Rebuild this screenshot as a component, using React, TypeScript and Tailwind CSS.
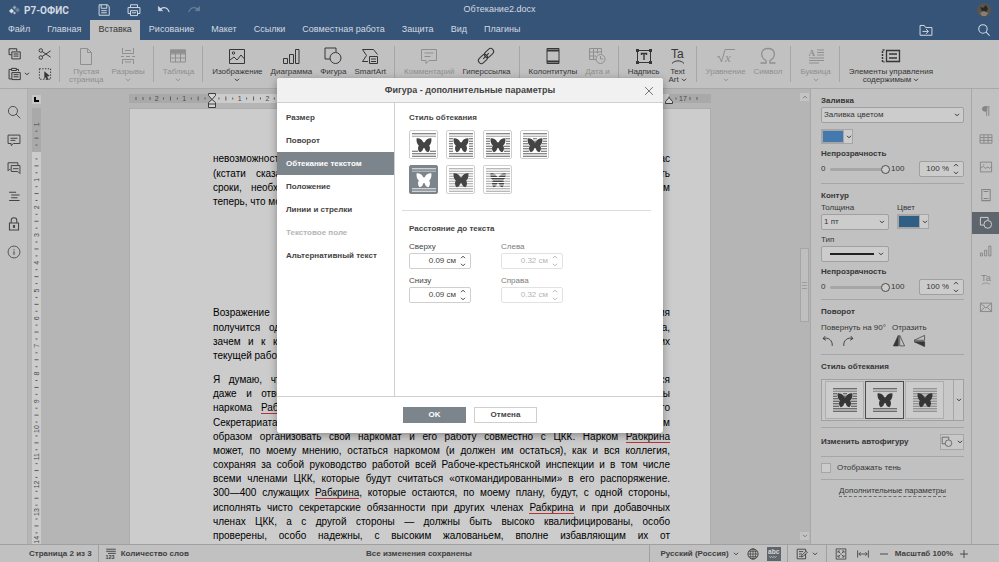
import clsx from 'clsx'
import type { ReactNode } from 'react'

type WrapKind = 'inline' | 'square' | 'tight' | 'through' | 'topbottom' | 'front' | 'behind'

const CM = 27.7

function Icon({
  children,
  size = 'size-5',
  className,
}: {
  children: ReactNode
  size?: string
  className?: string
}) {
  return (
    <svg
      viewBox="0 0 20 20"
      className={clsx(size, 'shrink-0', className)}
      fill="none"
      stroke="currentColor"
      strokeWidth="1"
      aria-hidden="true"
    >
      {children}
    </svg>
  )
}

function Chevron({ className }: { className?: string }) {
  return (
    <svg
      viewBox="0 0 6 4"
      className={clsx('h-1 w-1.5 shrink-0', className)}
      fill="none"
      stroke="currentColor"
      strokeWidth="1"
      aria-hidden="true"
    >
      <path d="M1 .8 3 2.8 5 .8" />
    </svg>
  )
}

const ROWS = [0, 1, 2, 3, 4, 5, 6, 7, 8, 9]

function wrapSegments(kind: WrapKind, row: number): number[][] {
  const edge = row < 2 || row > 7
  if (edge) return [[0, 24]]
  if (kind === 'topbottom') return []
  if (kind === 'inline') return row === 7 ? [[0, 6], [18, 24]] : []
  if (kind === 'square') return [[0, 4], [20, 24]]
  if (kind === 'tight') return row < 5 ? [[0, 4], [20, 24]] : [[0, 6], [18, 24]]
  if (kind === 'through') {
    if (row < 4) return [[0, 4], [10, 14], [20, 24]]
    return row < 5 ? [[0, 5], [19, 24]] : [[0, 6], [18, 24]]
  }
  return [[0, 24]]
}

function WrapIcon({ kind }: { kind: WrapKind }) {
  const faint = kind === 'front' || kind === 'behind'
  return (
    <svg viewBox="0 0 24 24" className="size-6" stroke="currentColor" fill="none" aria-hidden="true">
      {ROWS.flatMap((row) =>
        wrapSegments(kind, row).map(([from, to]) => (
          <path
            key={`${row}-${from}`}
            d={`M${from} ${0.75 + row * 2.5}H${to}`}
            opacity={faint || row === 1 ? 0.5 : 0.85}
          />
        )),
      )}
      <path
        d="M4.600 5.300C7.500 5 10.200 6.500 11.200 9.200H12.800C13.800 6.500 16.500 5 19.400 5.300C19.800 8.500 19 11.300 17.200 12.500C18.500 14.500 18.200 17.500 16.400 19.300C14.300 19 13.200 17.300 12.800 15.300H11.200C10.800 17.300 9.700 19 7.600 19.300C5.800 17.500 5.500 14.500 6.800 12.500C5 11.300 4.200 8.500 4.600 5.300Z"
        fill="currentColor"
        stroke="none"
      />
      {kind === 'behind' && (
        <path d="M4.500 7H19.500M4.500 9.500H19.500M4.500 12H19.500M4.500 14.500H19.500M4.500 17H19.500" stroke="#fff" />
      )}
    </svg>
  )
}

const TABS = ['Файл', 'Главная', 'Вставка', 'Рисование', 'Макет', 'Ссылки', 'Совместная работа', 'Защита', 'Вид', 'Плагины']

function Header() {
  return (
    <header className="bg-[#365477] text-[9px] text-[#d3dae2]">
      <div className="relative flex h-5 items-center px-2">
        <svg viewBox="0 0 12 12" className="size-3" aria-hidden="true">
          <path d="M1 7 3.5 4.5 6 7 3.5 9.5Z" fill="#d3dae2" />
          <path d="M4.5 3.5 6.5 1.5 8.5 3.5 6.5 5.5Z" fill="#8fa3ba" />
          <path d="M7 6 9.5 3.5 12 6 9.5 8.5Z" fill="#6d7f94" />
          <path d="M5 9 6.5 7.5 8 9 6.5 10.5Z" fill="#b7c3d0" />
        </svg>
        <span className="ml-1 w-[45px] whitespace-nowrap font-[Roboto,sans-serif] text-[10px] font-bold">Р7-ОФИС</span>
        <div className="ml-7 flex items-center gap-4">
          <button type="button" aria-label="Сохранить">
            <Icon size="size-3.5">
              <path d="M3 2.5h12l2.5 3v12H3zM6 2.5v5h8v-5M6 11h8M6 14h8" strokeWidth="1.4" />
            </Icon>
          </button>
          <button type="button" aria-label="Печать">
            <Icon size="size-3.5">
              <path d="M5 6V2.500h10V6M5 15H1.500V6.500h17V15H15M5 11h10v7H5zM7 14h6" strokeWidth="1.4" />
            </Icon>
          </button>
          <button type="button" aria-label="Отменить">
            <Icon size="size-3.5">
              <path d="M4 9C9 5 15 6 17.500 13" strokeWidth="1.5" />
              <path d="M2 5v6h6z" fill="currentColor" />
            </Icon>
          </button>
          <button type="button" aria-label="Повторить" className="text-[#68819c]">
            <Icon size="size-3.5">
              <path d="M16 9C11 5 5 6 2.500 13" strokeWidth="1.5" />
              <path d="M18 5v6h-6z" fill="currentColor" />
            </Icon>
          </button>
        </div>
        <span className="absolute inset-x-0 text-center">Обтекание2.docx</span>
        <svg viewBox="0 0 14 14" className="ml-auto size-3.5" aria-hidden="true">
          <circle cx="7" cy="7" r="7" fill="#57554f" />
          <path d="M3 4 6 5 9 2 11 6 9 9 5 8Z" fill="#2a2724" />
          <path d="M3 10 7 8 11 10 9 13H5Z" fill="#8a7f72" />
        </svg>
      </div>
      <nav className="flex h-5 items-stretch gap-px" aria-label="Вкладки">
        {TABS.map((tab) => (
          <button
            key={tab}
            type="button"
            className={clsx('px-2', tab === 'Вставка' && 'bg-[#c1c1c1] text-[#363636]')}
          >
            {tab}
          </button>
        ))}
        <div className="ml-auto flex items-center gap-11 pr-2">
          <button type="button" aria-label="Открыть расположение файла">
            <Icon size="size-3.5">
              <path d="M1.500 3.500h6l2 3h9v11h-17zM5 12h8M10 8.500l3.500 3.500-3.500 3.500" strokeWidth="1.4" />
            </Icon>
          </button>
          <button type="button" aria-label="Поиск">
            <Icon size="size-3.5">
              <circle cx="8.500" cy="8.500" r="6" strokeWidth="1.5" />
              <path d="m13 13 5 5" strokeWidth="1.5" />
            </Icon>
          </button>
        </div>
      </nav>
    </header>
  )
}

function Tool({
  icon,
  label,
  second,
  menu,
  off,
}: {
  icon: ReactNode
  label: string
  second?: string
  menu?: boolean
  off?: boolean
}) {
  return (
    <button
      type="button"
      disabled={off}
      className={clsx('flex flex-col items-center pt-1.5 leading-[8px]', off && 'text-[#8f8f8f]')}
    >
      <Icon>{icon}</Icon>
      <span className="mt-0.5 whitespace-nowrap">{label}</span>
      <span className="flex h-2 items-center gap-0.5 whitespace-nowrap">
        {second}
        {menu && <Chevron />}
      </span>
    </button>
  )
}

function Divider() {
  return <span className="my-1.5 mr-px w-px bg-[#a6a6a6]" />
}

const SHAPES = (
  <>
    <path d="M7 13H2V2h11v4" />
    <circle cx="12.500" cy="12" r="5.500" />
  </>
)

function Toolbar() {
  return (
    <div className="flex h-[49px] gap-2 border-b border-[#a8a8a8] bg-[#c1c1c1] pl-2 text-[8px] text-[#363636]">
      <div className="grid w-[43px] grid-cols-2 content-center gap-x-4 gap-y-1.5">
        <button type="button" aria-label="Копировать">
          <Icon size="size-3.5">
            <path d="M5 11H1.500V2.500h11V6M5.500 7h12v10h-12zM8 10h7M8 13h7" strokeWidth="1.4" />
          </Icon>
        </button>
        <button type="button" aria-label="Вырезать">
          <Icon size="size-3.5">
            <circle cx="4" cy="5" r="2.500" strokeWidth="1.4" />
            <circle cx="4" cy="15" r="2.500" strokeWidth="1.400" />
            <path d="m6 6.500 12 8M6 13.500l12-8" strokeWidth="1.4" />
          </Icon>
        </button>
        <button type="button" aria-label="Вставить" className="flex items-center gap-0.5">
          <Icon size="size-3.5">
            <path d="M5 17H1.500V3.500H5M12 3.500h3V6M5 2h7v3H5zM5.500 8h12v10h-12zM8 11h7M8 14h7" strokeWidth="1.4" />
          </Icon>
          <Chevron />
        </button>
        <button type="button" aria-label="Выделить все">
          <Icon size="size-3.5">
            <path d="M2 2.500h16v15H2z" strokeDasharray="2 2" strokeWidth="1.4" />
            <path d="m9 6 8 7-4 .5 2 4-2 1-2-4-2 3z" fill="currentColor" stroke="none" />
          </Icon>
        </button>
      </div>
      <Divider />
      <Tool off label="Пустая" second="страница" icon={<path d="M4.500 2.500h7l4 4v12h-11zM11.500 2.500v4h4" />} />
      <Tool
        off
        menu
        label="Разрывы"
        icon={<path d="M4.500 2v5.500h11V2M3 10.500h3m2 0h4m2 0h3M4.500 18v-4.500h11V18M7 4.500h6M7 16h6" />}
      />
      <Divider />
      <Tool
        off
        menu
        label="Таблица"
        icon={
          <>
            <path d="M2.500 4h15v12h-15zM2.500 8h15M2.500 12h15M7.500 4v12M12.500 4v12" />
            <path d="M2.500 4h15v3h-15z" fill="currentColor" />
          </>
        }
      />
      <Divider />
      <Tool
        menu
        label="Изображение"
        icon={
          <>
            <path d="M2.500 3.500h15v14h-15zM3 14l4-3 3 3 4-5 3.500 4" />
            <circle cx="6.500" cy="7" r="1.200" />
          </>
        }
      />
      <Tool label="Диаграмма" icon={<path d="M2.500 12.500h4v5h-4zM8.500 8.500h4v9h-4zM14.500 3.500h3.500v14h-3.500z" />} />
      <Tool menu label="Фигура" icon={SHAPES} />
      <Tool
        label="SmartArt"
        icon={
          <>
            <path d="M8 15.500H2.500l4-6-4-6h11l4 5" />
            <path d="M9.500 10.500h8v7h-8zM11 13h5M11 15.500h5" />
          </>
        }
      />
      <Divider />
      <Tool off label="Комментарий" icon={<path d="M2.500 3.500h15v11H10L7 17.500v-3H2.500zM5.500 7h9M5.500 10.500h6" />} />
      <Tool
        label="Гиперссылка"
        icon={
          <g transform="rotate(-45 10 10)">
            <rect x="0.500" y="7" width="10.500" height="6" rx="3" />
            <rect x="9" y="7" width="10.500" height="6" rx="3" />
            <path d="M6 10h8" />
          </g>
        }
      />
      <Divider />
      <Tool
        label="Колонтитулы"
        menu
        icon={
          <>
            <path d="M4 2.500h12v15H4z" />
            <path d="M4 4.500h12M4 15.500h12" strokeWidth="2" />
          </>
        }
      />
      <Tool
        off
        label="Дата и"
        second="время"
        icon={
          <>
            <path d="M9 13.500H2.500v-11h12v5M2.500 6h12M2.500 10H9M6.500 2.500v11M10.500 2.500v5" />
            <circle cx="13.500" cy="13" r="4.500" />
            <path d="M13.500 10v3h2.500" />
          </>
        }
      />
      <Divider />
      <Tool
        label="Надпись"
        menu
        icon={
          <>
            <path d="M3.500 4.500h13v12h-13z" />
            <path d="M7.500 9V7.500h5V9M10 7.500V14" strokeWidth="1.400" />
            <path d="M2 3h3v3H2zM15 3h3v3h-3zM2 15h3v3H2zM15 15h3v3h-3z" fill="currentColor" stroke="none" />
          </>
        }
      />
      <Tool
        label="Text"
        second="Art"
        menu
        icon={
          <>
            <text x="3" y="12" fontSize="12" fill="currentColor" stroke="none">
              Ta
            </text>
            <path d="M4 17.500C7 14 13 14 16 17.500" />
          </>
        }
      />
      <Divider />
      <Tool
        off
        menu
        label="Уравнение"
        icon={
          <>
            <path d="M1 11.500 3 10l2.500 6L9 3.500h10" />
            <text x="9" y="15.500" fontSize="13" fontStyle="italic" fill="currentColor" stroke="none" fontFamily="Liberation Serif">
              x
            </text>
          </>
        }
      />
      <Tool
        off
        label="Символ"
        icon={
          <path
            d="M2.500 17H8v-2.500C1.500 11 2.500 2.500 10 2.500S18.500 11 12 14.500V17h5.500"
            strokeWidth="1.300"
          />
        }
      />
      <Divider />
      <Tool
        off
        menu
        label="Буквица"
        icon={
          <>
            <path d="M11 4h7M11 6.500h7M11 9h7M3 12h15M3 14.500h15M3 17h10" />
            <text x="2.500" y="10" fontSize="9" fontWeight="bold" fill="currentColor" stroke="none" fontFamily="Liberation Serif">
              A
            </text>
          </>
        }
      />
      <Divider />
      <Tool
        label="Элементы управления"
        second="содержимым"
        menu
        icon={
          <>
            <path d="M5.500 4.500h13v11h-13z" strokeWidth="1.300" />
            <path d="M8 8h8M8 12h8" strokeWidth="1.500" />
            <path d="M3.500 4h-2v12h2" strokeDasharray="2 1" strokeWidth="1.500" />
          </>
        }
      />
    </div>
  )
}

function LeftRail() {
  return (
    <aside className="flex w-7 shrink-0 flex-col items-center gap-3.5 border-r border-[#b0b0b0] bg-[#c1c1c1] pt-4 text-[#444]">
      <button type="button" aria-label="Поиск">
        <Icon size="size-3.5">
          <circle cx="8.500" cy="8.500" r="6.500" strokeWidth="1.300" />
          <path d="m13 13 6 6" strokeWidth="1.300" />
        </Icon>
      </button>
      <button type="button" aria-label="Комментарии">
        <Icon size="size-3.5">
          <path d="M1.500 3h17v12H9l-3 3v-3H1.500zM5 7.500h10M5 10.500h7" strokeWidth="1.400" />
        </Icon>
      </button>
      <button type="button" aria-label="Чат">
        <Icon size="size-3.5">
          <path d="M5 12H3.500l-2 2V2.500h14V6M6 6.500h12.500V18l-3-3H6zM8.500 11h8" strokeWidth="1.400" />
        </Icon>
      </button>
      <button type="button" aria-label="Навигация">
        <Icon size="size-3.5">
          <path d="M3 4.500h10M6 8.500h12M6 12.500h9M3 16.500h15" strokeWidth="1.500" />
        </Icon>
      </button>
      <button type="button" aria-label="Защита">
        <Icon size="size-3.5">
          <path d="M3.500 8.500h13v10h-13zM6 8.500V5a4 4 0 0 1 8 0v3.500" strokeWidth="1.500" />
          <path d="M10 11.500v4" strokeWidth="3" />
        </Icon>
      </button>
      <button type="button" aria-label="О программе">
        <Icon size="size-3.5">
          <circle cx="10" cy="10" r="8.500" strokeWidth="1.200" />
          <path d="M10 9v5M10 6v1.500" strokeWidth="1.500" />
        </Icon>
      </button>
    </aside>
  )
}

// ticks every quarter of a centimetre, a number on every whole one
function RulerMarks({ zero, from, to, vertical }: { zero: number; from: number; to: number; vertical?: boolean }) {
  const marks = []
  for (let q = from * 4; q <= to * 4; q++) {
    const at = zero + (q * CM) / 4
    if (q % 4 === 0) {
      if (q === 0) continue
      const label = Math.abs(q / 4)
      marks.push(
        <text
          key={q}
          x={vertical ? 0 : at}
          y={vertical ? 0 : 7}
          transform={vertical ? `translate(7 ${at}) rotate(-90)` : undefined}
          textAnchor="middle"
          fontSize="7"
          fill="#4a4a4a"
        >
          {label}
        </text>,
      )
      continue
    }
    const half = q % 2 === 0 ? 2 : 1
    marks.push(
      <path key={q} d={vertical ? `M${4.5 - half} ${at}h${half * 2}` : `M${at} ${4.5 - half}v${half * 2}`} stroke="#5c5c5c" />,
    )
  }
  return <>{marks}</>
}

function VerticalRuler() {
  return (
    <div className="ml-1 flex w-[9px] shrink-0 flex-col gap-1 overflow-hidden pt-1.5">
      <div className="h-[9px] shrink-0 bg-[#c6c6c6] p-0.5">
        <svg viewBox="0 0 5 5" className="size-[5px]" aria-hidden="true">
          <path d="M1 0V4H5" stroke="#000" strokeWidth="2" fill="none" />
        </svg>
      </div>
      <svg className="w-[9px] flex-1 bg-[#a9a9a9]" aria-hidden="true">
        <rect x="0" y="44" width="9" height="100%" fill="#cccccc" />
        <RulerMarks zero={44} from={-1} to={14} vertical />
      </svg>
    </div>
  )
}

function Misspelled({ children }: { children: ReactNode }) {
  return <span className="border-b border-[#b8323c]">{children}</span>
}

const RABKRIN = <Misspelled>Рабкрина</Misspelled>

const FIRST: ReactNode[] = [
  'невозможности, до неприличия дореволюционным, остается до сих пор таким и у нас',
  '(кстати сказать, мы теперь получили случай, который едва ли часто будет иметь',
  'сроки, необходимые для производства коренных социальных изменений, и мы видим',
]

const SECOND: ReactNode[] = [
  'Возражение это состоит в том, будто бы из предлагаемого мною преобразования',
  'получится один лишь хаос. Члены ЦКК будут слоняться всюду, не зная даже, куда,',
  'зачем и к кому им обратиться, внося всюду дезорганизацию, отрывая служащих от их',
]

const THIRD: ReactNode[] = [
  'Я думаю, что злостный источник этого возражения настолько ясен, что не требуется',
  'даже и ответа. Само собой ясно, что со стороны президиума ЦКК и со стороны',
  <>наркома {RABKRIN} и его коллегии (а также в других случаях и со стороны нашего</>,
  'Секретариата ЦК) нужен будет не один год упорной работы, чтобы правильным',
  <>образом организовать свой наркомат и его работу совместно с ЦКК. Нарком {RABKRIN}</>,
  'может, по моему мнению, остаться наркомом (и должен им остаться), как и вся коллегия,',
  'сохраняя за собой руководство работой всей Рабоче-крестьянской инспекции и в том числе',
  'всеми членами ЦКК, которые будут считаться «откомандированными» в его распоряжение.',
  <>300—400 служащих {RABKRIN}, которые остаются, по моему плану, будут, с одной стороны,</>,
  <>исполнять чисто секретарские обязанности при других членах {RABKRIN} и при добавочных</>,
  'членах ЦКК, а с другой стороны — должны быть высоко квалифицированы, особо',
  'проверены, особо надежны, с высоким жалованьем, вполне избавляющим их от',
]

function Paragraph({ lines, className }: { lines: ReactNode[]; className: string }) {
  return (
    <p className={clsx('flex flex-col justify-between', className)}>
      {lines.map((line, i) => (
        <span key={i} className="block h-3 whitespace-nowrap leading-3 [text-align-last:justify]">
          {line}
        </span>
      ))}
    </p>
  )
}

function DocumentArea() {
  return (
    <main className="flex min-w-0 flex-1 overflow-hidden">
      <VerticalRuler />
      <div className="min-w-0 flex-1 overflow-hidden pt-1">
        <div className="mx-auto w-[582px]">
          <svg className="h-[15px] w-full" aria-hidden="true">
            <rect x="0" y="1" width="100%" height="9" fill="#a9a9a9" />
            <rect x="83" y="1" width="457" height="9" fill="#cccccc" />
            <g transform="translate(0 1)">
              <RulerMarks zero={83} from={-2} to={17} />
              <path d="M7 3v3M14 3v3M21 3v3M561 3v3M568 3v3" stroke="#5c5c5c" />
            </g>
            <path d="M79.500 .5h7v2l-3.500 4 3.500 3v5h-7v-5l3.500-3-3.500-4zM79.500 11h7" fill="#d4d4d4" stroke="#3c3c3c" />
            <path d="M536.500 10.500v-2l3.500-4 3.500 4v2z" fill="#d4d4d4" stroke="#3c3c3c" />
          </svg>
          <article className="h-screen border border-[#adadad] bg-[#ccc] pt-11 pr-10 pl-[83px] text-[10px] text-black">
            <Paragraph lines={FIRST} className="h-[41px]" />
            <p className="mt-0.5 leading-3">теперь, что можно сделать в пять лет.</p>
            <Paragraph lines={SECOND} className="mt-[99px] h-[41px]" />
            <p className="mt-0.5 leading-3">текущей работы, и т. д. и т. п.</p>
            <Paragraph lines={THIRD} className="mt-3 h-[168px]" />
          </article>
        </div>
      </div>
      <div className="flex w-[11px] shrink-0 flex-col items-center py-1 text-[#7c7c7c]">
        <button type="button" aria-label="Прокрутить вверх" className="flex h-2 w-[9px] items-center justify-center bg-[#c4c4c4]">
          <Chevron className="rotate-180" />
        </button>
        <div className="flex flex-1 flex-col items-center">
          <div className="flex-[148]" />
          <div className="flex h-[74px] w-[9px] items-center justify-center border border-[#a6a6a6] bg-[#bfbfbf]">
            <svg viewBox="0 0 5 8" className="h-2 w-[5px]" aria-hidden="true">
              <path d="M0 1.500h5M0 4.500h5M0 7.500h5" stroke="#9c9c9c" />
            </svg>
          </div>
          <div className="flex-[211]" />
        </div>
        <button type="button" aria-label="Прокрутить вниз" className="flex h-2 w-[9px] items-center justify-center bg-[#c4c4c4]">
          <Chevron />
        </button>
      </div>
    </main>
  )
}

function Rule() {
  return <hr className="border-0 border-t border-[#a6a6a6]" />
}

function Opacity({ id }: { id: string }) {
  return (
    <div>
      <label htmlFor={id} className="block font-bold leading-3">
        Непрозрачность
      </label>
      <div className="mt-px flex h-4 items-center">
        <span className="w-[9px]">0</span>
        <input
          id={id}
          type="range"
          defaultValue={100}
          className="h-[3px] w-[60px] appearance-none rounded-full bg-[#a6a6a6] [&::-webkit-slider-thumb]:size-[9px] [&::-webkit-slider-thumb]:appearance-none [&::-webkit-slider-thumb]:rounded-full [&::-webkit-slider-thumb]:border [&::-webkit-slider-thumb]:border-[#4c4c4c] [&::-webkit-slider-thumb]:bg-[#ccc]"
        />
        <span className="ml-px">100</span>
        <Spinner id={`${id}-value`} label="Непрозрачность, %" value="100 %" className="ml-auto w-[45px] border-[#a0a0a0] bg-[#ccc]" />
      </div>
    </div>
  )
}

function Spinner({
  id,
  label,
  value,
  disabled,
  className,
}: {
  id: string
  label?: string
  value: string
  disabled?: boolean
  className: string
}) {
  return (
    <span className={clsx('flex h-4 items-center rounded-xs border pr-1', className)}>
      <input
        id={id}
        aria-label={label}
        defaultValue={value}
        disabled={disabled}
        className="w-full min-w-0 bg-transparent pr-1 text-right"
      />
      <span className="flex flex-col gap-1">
        <Chevron className="rotate-180" />
        <Chevron />
      </span>
    </span>
  )
}

function Swatch({ color, label }: { color: string; label: string }) {
  return (
    <button type="button" aria-label={label} className="flex h-[15px] w-8 items-center gap-0.5 border border-[#a6a6a6] bg-[#ccc]">
      <span className={clsx('h-full w-[23px] border border-[#a6a6a6]', color)} />
      <Chevron />
    </button>
  )
}

function SettingsPanel() {
  return (
    <aside className="flex w-[161px] shrink-0 flex-col border-l border-[#a8a8a8] bg-[#c1c1c1] pt-1.5 pr-[7px] pl-2.5 text-[8px] text-[#363636]">
      <label htmlFor="fill" className="block font-bold leading-3">
        Заливка
      </label>
      <div className="relative">
        <select id="fill" className="h-4 w-full appearance-none rounded-xs border border-[#a0a0a0] bg-[#ccc] px-0.5">
          <option>Заливка цветом</option>
        </select>
        <Chevron className="pointer-events-none absolute top-1.5 right-1" />
      </div>
      <div className="mt-1.5">
        <Swatch color="bg-[#4379ac]" label="Цвет заливки" />
      </div>
      <div className="mt-1">
        <Opacity id="fill-opacity" />
      </div>
      <div className="my-1.5">
        <Rule />
      </div>
      <h3 className="font-bold leading-3">Контур</h3>
      <div className="flex gap-2 leading-3">
        <div className="relative w-[68px]">
          <label htmlFor="width" className="block">
            Толщина
          </label>
          <select id="width" className="h-4 w-full appearance-none rounded-xs border border-[#a0a0a0] bg-[#ccc] px-0.5">
            <option>1 пт</option>
          </select>
          <Chevron className="pointer-events-none absolute right-1 bottom-1.5" />
        </div>
        <div>
          <span className="block">Цвет</span>
          <Swatch color="bg-[#305f86]" label="Цвет контура" />
        </div>
      </div>
      <span className="mt-1 leading-3">Тип</span>
      <button type="button" aria-label="Тип линии" className="flex h-4 w-[68px] items-center justify-between rounded-xs border border-[#a0a0a0] bg-[#ccc] pr-1 pl-2">
        <span className="h-0.5 w-11 bg-[#222]" />
        <Chevron />
      </button>
      <div className="mt-1">
        <Opacity id="line-opacity" />
      </div>
      <div className="mt-1 mb-1.5">
        <Rule />
      </div>
      <h3 className="font-bold leading-3">Поворот</h3>
      <div className="mt-1 flex gap-1.5 leading-3">
        <div>
          <span>Повернуть на 90°</span>
          <div className="flex gap-1.5">
            <button type="button" aria-label="Против часовой стрелки">
              <Icon size="size-3.5">
                <path d="M6 3 3 6.500l4 2.500M3 6.500C10 4 17 9 16 17" strokeWidth="1.300" />
              </Icon>
            </button>
            <button type="button" aria-label="По часовой стрелке">
              <Icon size="size-3.5">
                <path d="m14 3 3 3.500-4 2.500M17 6.500C10 4 3 9 4 17" strokeWidth="1.300" />
              </Icon>
            </button>
          </div>
        </div>
        <div>
          <span>Отразить</span>
          <div className="flex gap-1.5">
            <button type="button" aria-label="Отразить слева направо">
              <Icon size="size-3.5">
                <path d="M9 2v15H2z" fill="currentColor" />
                <path d="M11 2v15h7z" />
              </Icon>
            </button>
            <button type="button" aria-label="Отразить сверху вниз">
              <Icon size="size-3.5">
                <path d="M18 9H3l15-7z" />
                <path d="M18 11H3l15 7z" fill="currentColor" />
              </Icon>
            </button>
          </div>
        </div>
      </div>
      <div className="my-1.5">
        <Rule />
      </div>
      <h3 className="font-bold leading-3">Стиль обтекания</h3>
      <div className="mt-1.5 flex h-[42px] items-center gap-px border border-[#a0a0a0] bg-[#c8c8c8] pl-[3px]">
        {(['through', 'topbottom', 'front'] as WrapKind[]).map((kind) => (
          <button
            key={kind}
            type="button"
            aria-label={kind}
            className={clsx(
              'grid h-[38px] w-[39px] place-items-center border bg-[#ccc]',
              kind === 'topbottom' ? 'border-[#4c4c4c]' : 'border-[#adadad]',
            )}
          >
            <WrapIcon kind={kind} />
          </button>
        ))}
        <button type="button" aria-label="Все стили" className="ml-auto grid h-full w-2.5 place-items-center border-l border-[#a6a6a6]">
          <Chevron />
        </button>
      </div>
      <div className="my-1.5">
        <Rule />
      </div>
      <div className="flex items-center justify-between">
        <span className="font-bold">Изменить автофигуру</span>
        <button type="button" aria-label="Изменить автофигуру" className="flex h-4 w-6 items-center justify-center gap-1 border border-[#a6a6a6] bg-[#c8c8c8]">
          <Icon size="size-3">{SHAPES}</Icon>
          <Chevron />
        </button>
      </div>
      <div className="mt-1.5">
        <Rule />
      </div>
      <label className="my-1.5 flex h-2.5 items-center gap-1.5">
        <input type="checkbox" className="size-2.5 appearance-none border border-[#a6a6a6] bg-[#ccc]" />
        Отображать тень
      </label>
      <Rule />
      <a href="#" className="mt-1.5 self-center border-b border-dashed border-[#6c6c6c] leading-[10px]">
        Дополнительные параметры
      </a>
    </aside>
  )
}

const RAIL: { name: string; icon: ReactNode }[] = [
  {
    name: 'Абзац',
    icon: (
      <>
        <path d="M15 4H8a3 3 0 0 0 0 6h2M11 4v13M14 4v13" strokeWidth="1.300" />
        <path d="M11 4H8a3 3 0 0 0 0 6h3z" fill="currentColor" />
      </>
    ),
  },
  { name: 'Таблица', icon: <path d="M1.500 4h17v12h-17zM1.500 8h17M1.500 12h17M7 4v12M13 4v12" strokeWidth="1.300" /> },
  { name: 'Изображение', icon: <path d="M2 3h16v14H2zM2 12l4-3 3 3 4-2 2 2 3-3M6 7h1.500" strokeWidth="1.300" /> },
  { name: 'Колонтитулы', icon: <path d="M4 2h12v16H4zM6.500 5h7M6.500 15h7" strokeWidth="1.500" /> },
  { name: 'Фигура', icon: <g strokeWidth="1.400">{SHAPES}</g> },
  { name: 'Диаграмма', icon: <path d="M2 13h3v4H2zM8 9h3v8H8zM14 3h3v14h-3z" strokeWidth="1.300" /> },
  {
    name: 'Text Art',
    icon: (
      <>
        <text x="3" y="13" fontSize="13" fill="currentColor" stroke="none">
          Ta
        </text>
        <path d="M4 18C7 15 13 15 16 18" />
      </>
    ),
  },
  { name: 'Рассылки', icon: <path d="M2 4.500h16v12H2zM2 4.500l8 7 8-7M2 16.500l6-6M18 16.500l-6-6" strokeWidth="1.300" /> },
]

function RightRail() {
  return (
    <aside className="flex w-7 shrink-0 flex-col border-l border-[#a8a8a8] bg-[#c1c1c1] pt-[11px] text-[#858585]">
      {RAIL.map(({ name, icon }) => (
        <button
          key={name}
          type="button"
          aria-label={name}
          className={clsx('mb-1.5 grid h-[22px] place-items-center', name === 'Фигура' && 'bg-[#5f656c] text-[#d0d0d0]')}
        >
          <Icon size="size-3.5">{icon}</Icon>
        </button>
      ))}
    </aside>
  )
}

function StatusBar() {
  return (
    <footer className="relative flex h-[18px] shrink-0 items-stretch border-t border-[#a0a0a0] bg-[#c1c1c1] text-[8px] font-bold text-[#404040]">
      <span className="flex items-center pr-1.5 pl-[29px]">Страница 2 из 3</span>
      <button type="button" className="flex items-center gap-1 border-l border-[#a0a0a0] pl-1.5">
        <Icon size="size-3">
          <path d="M2 2h16M2 5.500h16M5 9h13" strokeWidth="1.500" />
          <text x="1" y="19" fontSize="9" fill="currentColor" stroke="none">
            123
          </text>
        </Icon>
        Количество слов
      </button>
      <span className="pointer-events-none absolute inset-y-0 left-[366px] flex items-center">Все изменения сохранены</span>
      <div className="ml-auto flex items-center gap-2 border-l border-[#a0a0a0] pl-2.5">
        <button type="button" className="flex items-center gap-1">
          Русский (Россия) <Chevron />
        </button>
        <Icon size="size-3">
          <circle cx="10" cy="10" r="8.500" strokeWidth="1.500" />
          <path d="M1.500 10h17M10 1.500v17M3 5.500h14M3 14.500h14" strokeWidth="1.200" />
          <ellipse cx="10" cy="10" rx="4.500" ry="8.500" strokeWidth="1.200" />
        </Icon>
        <button type="button" aria-label="Проверка орфографии" className="grid size-3.5 place-items-center bg-[#5f656c] text-[#d8d8d8]">
          <Icon size="size-3">
            <text x="0" y="10" fontSize="11" fill="currentColor" stroke="none">
              abc
            </text>
            <path d="m2 14 2 2 2-2 2 2 2-2 2 2 2-2" strokeWidth="1.300" />
          </Icon>
        </button>
      </div>
      <div className="ml-1.5 flex items-center gap-1 border-l border-[#a0a0a0] px-2">
        <Icon size="size-3">
          <path d="M16 10v8H2V2h14v3M5 6h7M5 10h5M5 14h3M9 15l1-3 7-7 2 2-7 7z" strokeWidth="1.500" />
        </Icon>
        <Chevron />
      </div>
      <div className="flex items-center border-l border-[#a0a0a0] pr-[30px] pl-2">
        <div className="mr-2.5 flex gap-2.5">
          <Icon size="size-3">
            <path d="M2 1.500h16v17H2zM5 8V5h3M12 5h3v3M15 12v3h-3M8 15H5v-3M6 6l3 3M14 6l-3 3M6 14l3-3M14 14l-3-3" strokeWidth="1.400" />
          </Icon>
          <Icon size="size-3">
            <path d="M1 4v12M19 4v12M3 10h14M6 7l-3 3 3 3M14 7l3 3-3 3" strokeWidth="1.400" />
          </Icon>
        </div>
        <div className="flex items-center gap-1.5">
          <button type="button" aria-label="Уменьшить">
            <Icon size="size-2.5">
              <path d="M2 10h16" strokeWidth="1.800" />
            </Icon>
          </button>
          <span>Масштаб 100%</span>
          <button type="button" aria-label="Увеличить">
            <Icon size="size-2.5">
              <path d="M2 10h16M10 2v16" strokeWidth="1.800" />
            </Icon>
          </button>
        </div>
      </div>
    </footer>
  )
}

const SECTIONS = ['Размер', 'Поворот', 'Обтекание текстом', 'Положение', 'Линии и стрелки', 'Текстовое поле', 'Альтернативный текст']

const WRAPS: WrapKind[] = ['inline', 'square', 'tight', 'through', 'topbottom', 'front', 'behind']

const DISTANCES = [
  { id: 'top', label: 'Сверху', value: '0.09 см' },
  { id: 'left', label: 'Слева', value: '0.32 см', off: true },
  { id: 'bottom', label: 'Снизу', value: '0.09 см' },
  { id: 'right', label: 'Справа', value: '0.32 см', off: true },
]

function ShapeDialog() {
  return (
    <div
      role="dialog"
      aria-labelledby="dialog-title"
      className="absolute top-[78px] left-[277px] flex h-[355px] w-[386px] flex-col overflow-hidden rounded-[3px] bg-white text-[8px] text-[#444] shadow-[0_2px_8px_rgba(0,0,0,0.35)]"
    >
      <div className="relative flex h-[25px] items-center justify-center border-b border-[#cfcfcf] bg-[#f1f1f1] pt-0.5">
        <h2 id="dialog-title" className="text-[9px] font-bold">
          Фигура - дополнительные параметры
        </h2>
        <button type="button" aria-label="Закрыть" className="absolute right-2">
          <Icon size="size-3">
            <path d="M3.500 3.500l13 13M16.500 3.500l-13 13" strokeWidth="1.200" />
          </Icon>
        </button>
      </div>
      <div className="flex flex-1">
        <nav className="flex w-[118px] flex-col border-r border-[#cfcfcf] pt-[3px]">
          {SECTIONS.map((name) => (
            <button
              key={name}
              type="button"
              disabled={name === 'Текстовое поле'}
              className={clsx(
                'h-[23px] pl-[9px] text-left font-bold disabled:text-[#b5b5b5]',
                name === 'Обтекание текстом' && 'bg-[#7d858c] text-white',
              )}
            >
              {name}
            </button>
          ))}
        </nav>
        <div className="flex-1 px-[14px] pt-[9px]">
          <h3 className="font-bold leading-3">Стиль обтекания</h3>
          <div className="mt-1.5 grid w-fit grid-cols-4 gap-x-2 gap-y-1.5">
            {WRAPS.map((kind) => (
              <button
                key={kind}
                type="button"
                aria-label={kind}
                className={clsx(
                  'grid size-[29px] place-items-center rounded-xs border',
                  kind === 'topbottom' ? 'border-[#7d858c] bg-[#7d858c] text-white' : 'border-[#cfcfcf]',
                )}
              >
                <WrapIcon kind={kind} />
              </button>
            ))}
          </div>
          <hr className="mt-4 -mr-0.5 -ml-[7px] border-0 border-t border-[#dcdcdc]" />
          <h3 className="mt-3 font-bold leading-3">Расстояние до текста</h3>
          <div className="mt-1.5 grid w-[154px] grid-cols-2 gap-x-[30px] gap-y-1.5">
            {DISTANCES.map(({ id, label, value, off }) => (
              <div key={id} className={clsx('w-[62px]', off && 'text-[#b5b5b5]')}>
                <label htmlFor={id} className={clsx('block leading-3', off && 'text-[#7c7c7c]')}>
                  {label}
                </label>
                <Spinner id={id} value={value} disabled={off} className={off ? 'border-[#e2e2e2]' : 'border-[#cfcfcf]'} />
              </div>
            ))}
          </div>
        </div>
      </div>
      <div className="flex h-[37px] items-center justify-center gap-2 border-t border-[#cfcfcf]">
        <button type="button" className="h-4 w-[63px] bg-[#7d858c] font-bold text-white">
          OK
        </button>
        <button type="button" className="h-4 w-[63px] border border-[#cfcfcf] font-bold">
          Отмена
        </button>
      </div>
    </div>
  )
}

export default function App() {
  return (
    <div className="relative flex h-screen flex-col overflow-hidden bg-[#b5b5b5] font-['Liberation_Sans',Arial,sans-serif]">
      <Header />
      <Toolbar />
      <div className="flex min-h-0 flex-1">
        <LeftRail />
        <DocumentArea />
        <SettingsPanel />
        <RightRail />
      </div>
      <StatusBar />
      <ShapeDialog />
    </div>
  )
}
